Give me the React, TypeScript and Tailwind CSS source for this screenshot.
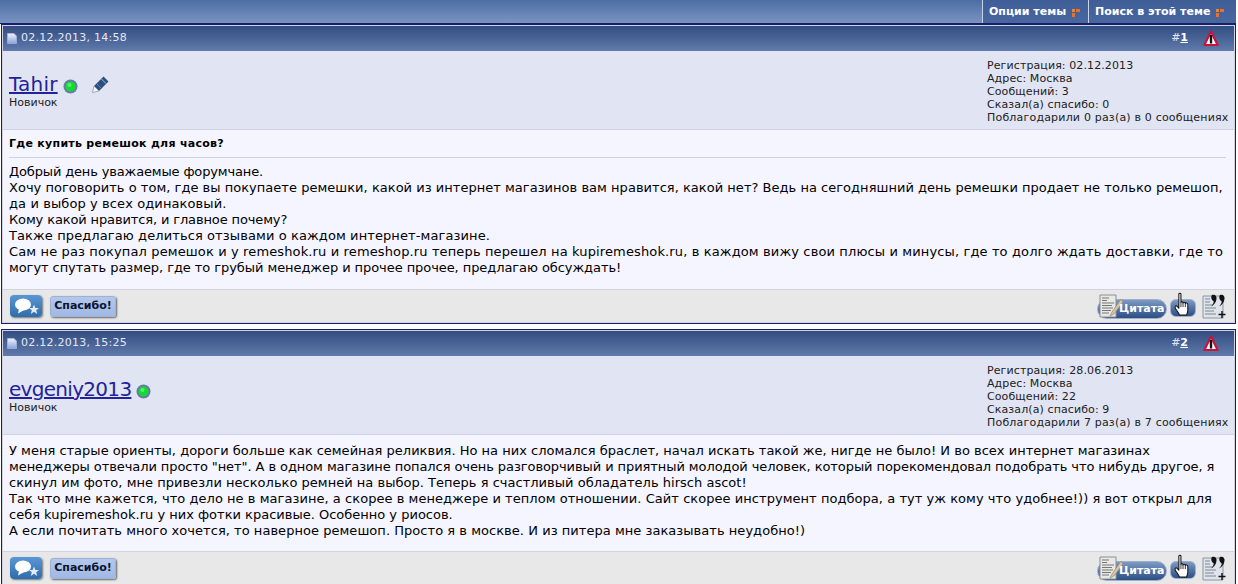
// Forum thread page: toolbar strip and two posts.
const FONT = "font-['DejaVu_Sans','Liberation_Sans',sans-serif]";

function MenuDots() {
  return (
    <svg width="8" height="8" viewBox="0 0 8 8" className="ml-[6px] mt-[1px]">
      <rect x="0" y="0" width="3" height="3" fill="#d98a3a" />
      <rect x="4" y="0" width="4" height="3" fill="#e8702a" />
      <rect x="0" y="4" width="3" height="4" fill="#e8702a" />
    </svg>
  );
}

function PostIcon() {
  return (
    <svg width="10" height="11" viewBox="0 0 10 11">
      <defs>
        <linearGradient id="doc" x1="0" y1="0" x2="0" y2="1">
          <stop offset="0" stopColor="#eef1fa" />
          <stop offset="1" stopColor="#8aa4dc" />
        </linearGradient>
      </defs>
      <path d="M0.5 0.5H7L9.5 3V10.5H0.5Z" fill="url(#doc)" stroke="#b4c0de" strokeWidth="0.6" />
    </svg>
  );
}

function WarnIcon() {
  return (
    <svg width="16" height="17" viewBox="0 0 16 17">
      <path d="M8 1.5L14.6 15H1.4Z" fill="#fff" stroke="#c8143c" strokeWidth="2.2" strokeLinejoin="round" />
      <rect x="6.8" y="5" width="2.4" height="8.5" fill="#111" />
    </svg>
  );
}

function OnlineDot() {
  return (
    <svg width="15" height="15" viewBox="0 0 15 15">
      <circle cx="7.5" cy="7.5" r="7" fill="#6a7aa6" />
      <circle cx="7.5" cy="7.5" r="5" fill="#12dc2e" />
      <circle cx="6.5" cy="6" r="2" fill="#52f268" />
    </svg>
  );
}

function PencilIcon() {
  return (
    <svg width="17" height="17" viewBox="0 0 17 17">
      <path d="M11.5 0.5L16.5 5.5L7 15L2 10Z" fill="#2c4f80" />
      <path d="M2 10L7 15L0.5 16.5Z" fill="#f4f4f8" stroke="#6f7f9c" strokeWidth="0.6" />
      <path d="M9.5 3L14 7.5" stroke="#a9c0e0" strokeWidth="1" />
      <path d="M5 8L9.5 12.5" stroke="#5f83b4" strokeWidth="1" />
    </svg>
  );
}

function CommentButton() {
  return (
    <div className="w-[32px] h-[22px] rounded-[4px] bg-gradient-to-b from-[#5b97d4] to-[#2f6cab] shadow-[1px_1px_2px_#777] flex items-center justify-center">
      <svg width="28" height="18" viewBox="0 0 28 18">
        <ellipse cx="11" cy="7.5" rx="8" ry="6" fill="#fff" />
        <path d="M7 12L6 16.5L12 13Z" fill="#fff" />
        <path d="M22 7.5L23.4 11H27L24.2 13.2L25.2 17L22 14.8L18.8 17L19.8 13.2L17 11H20.6Z" fill="#e4ecf8" />
      </svg>
    </div>
  );
}

function ThanksButton() {
  return (
    <div className="w-[66px] h-[21px] rounded-[3px] bg-gradient-to-b from-[#b4c8ec] to-[#a0b8e4] shadow-[1px_1px_2px_#666] border border-[#9fb2d6] flex items-center justify-center text-[11px] font-bold text-[#0c1430]">
      Спасибо!
    </div>
  );
}

function QuoteButton() {
  return (
    <div className="relative w-[70px] h-[25px]">
      <div className="absolute left-0 top-[5px] w-[70px] h-[20px] rounded-full bg-gradient-to-b from-[#7c9ac4] to-[#2d4f85] border border-[#a0b0c8]" />
      <svg width="28" height="25" viewBox="0 0 28 25" className="absolute left-[0px] top-0">
        <path d="M3 1H19V23H3Z" fill="#e8e8e4" stroke="#8a8f98" strokeWidth="1" />
        <path d="M5 4H12M5 6.5H10M5 9H17M5 11.5H15M5 14H16M5 16.5H14M5 19H12" stroke="#777" strokeWidth="1" />
        <path d="M24 5L15 18L13 22L17 20L26 8Z" fill="#d2c4a6" stroke="#8f8068" strokeWidth="0.6" />
      </svg>
      <span className="absolute left-[22px] top-[8px] text-[11px] leading-[14px] font-bold text-white">
        Цитата
      </span>
    </div>
  );
}

function HandIcon() {
  return (
    <div className="relative w-[26px] h-[25px]">
      <div className="absolute left-0 top-[5px] w-[26px] h-[18px] rounded-[6px] bg-gradient-to-b from-[#7c9ac4] to-[#2d4f85] border border-[#a0b0c8]" />
      <svg width="19" height="25" viewBox="0 0 17 24" className="absolute left-[3px] top-[-2px]">
        <path
          d="M5 2C5 0.8 7 0.8 7 2V10C7 9 9 9 9 10.5C9 9.5 11.2 9.5 11.2 11C11.2 10.2 13.6 10.2 13.6 12V17C13.6 19 13 20 12.5 22H5.5C5 20 3 18 1.6 15.5C0.8 14 2 12.8 3.2 13.6L5 15.5Z"
          fill="#fff"
          stroke="#111"
          strokeWidth="1"
          strokeLinejoin="round"
        />
        <path d="M7 10V14.5M9 10.5V14.5M11.2 11V14.5" stroke="#111" strokeWidth="0.8" />
      </svg>
    </div>
  );
}

function MultiQuoteIcon() {
  return (
    <svg width="26" height="25" viewBox="0 0 26 25">
      <path d="M1 2H21V24H1Z" fill="#dfe3ea" stroke="#8a94a8" strokeWidth="1" />
      <path d="M3 5H8M3 8H8M3 11H11M3 14H14M3 17H12M3 20H14" stroke="#7f8794" strokeWidth="1" />
      <path d="M10 1C13 0 15 2 14.5 5C14 8.5 12 11 9 12.5C11 10.5 11.8 9 11.6 7C9.5 6.5 8.5 2.5 10 1Z" fill="#111" />
      <path d="M18 1C21 0 23 2 22.5 5C22 8.5 20 11 17 12.5C19 10.5 19.8 9 19.6 7C17.5 6.5 16.5 2.5 18 1Z" fill="#111" />
      <path d="M20 17V24M16.5 20.5H23.5" stroke="#111" strokeWidth="1.4" />
    </svg>
  );
}

type Line = { text: string; cls: string };

type PostProps = {
  date: string;
  num: number;
  name: string;
  nameCls: string;
  edited?: boolean;
  reg: string;
  posts: number;
  said: number;
  thanked: string;
  thankedCls: string;
  title?: string;
  lines: Line[];
  bodyCls: string;
};

function Post({ date, num, name, nameCls, edited, reg, posts, said, thanked, thankedCls, title, lines, bodyCls }: PostProps) {
  return (
    <div className="border border-[#14206e] w-[1235px] ml-[1px] p-[1px] bg-[#d1d1e1]">
      <div className="h-[25px] flex items-center bg-gradient-to-b from-[#334d80] to-[#5f7aab] text-[11px] text-[#e6e6f8] pl-[4px]">
        <PostIcon />
        <span className="ml-[4px] tracking-[0.25px]">{date}</span>
        <span className="ml-auto">
          #<span className="font-bold underline text-white">{num}</span>
        </span>
        <span className="ml-[15px] mr-[15px] flex">
          <WarnIcon />
        </span>
      </div>
      <div className="h-[79px] bg-[#e1e4f2] border-b border-[#d1d1e9] flex text-[11px] leading-[13px] text-[#222]">
        <div className="pl-[6px] pt-[21px]">
          <div className="flex items-center">
            <a className={`text-[20px] leading-[24px] text-[#22229c] underline ${nameCls}`}>{name}</a>
            <span className="ml-[5px] mt-[5px] flex">
              <OnlineDot />
            </span>
            {edited && (
              <span className="ml-[14px] flex">
                <PencilIcon />
              </span>
            )}
          </div>
          <div>Новичок</div>
        </div>
        <div className="ml-auto w-[247px] pt-[8px] whitespace-nowrap tracking-[0.1px]">
          <div>Регистрация: {reg}</div>
          <div>Адрес: Москва</div>
          <div>Сообщений: {posts}</div>
          <div>Сказал(а) спасибо: {said}</div>
          <div className={thankedCls}>{thanked}</div>
        </div>
      </div>
      <div className={`${bodyCls} bg-[#f5f5ff] px-[6px] text-[13px] leading-[16px] text-black border-b border-[#d1d1e1] whitespace-nowrap`}>
        {title && (
          <>
            <div className="font-bold text-[11px] leading-[14px] tracking-[0.28px]">{title}</div>
            <div className="h-[1px] bg-[#d1d1e1] mt-[6px] mb-[6px] mr-[2px]" />
          </>
        )}
        {lines.map((l) => (
          <div key={l.text} className={l.cls}>
            {l.text}
          </div>
        ))}
      </div>
      <div className="h-[32px] bg-[#e8e8e8] flex items-center pl-[7px] pr-[6px]">
        <CommentButton />
        <span className="ml-[8px] flex">
          <ThanksButton />
        </span>
        <span className="ml-auto flex items-center">
          <QuoteButton />
          <span className="ml-[3px] flex">
            <HandIcon />
          </span>
          <span className="ml-[6px] flex">
            <MultiQuoteIcon />
          </span>
        </span>
      </div>
    </div>
  );
}

export default function App() {
  return (
    <div className={`${FONT} w-[1238px] h-[584px] overflow-hidden bg-white`}>
      <div className="h-[24px] w-[1236px] bg-gradient-to-b from-[#4c6ea6] to-[#7a94bf] border-b border-[#14206e] flex justify-end text-[11px] font-bold text-white">
        <div className="h-[23px] w-[106px] border-l border-[#c8d4e8] bg-gradient-to-b from-[#3f5e98] to-[#48679f] flex items-center pl-[6px] pt-[1px]">
          Опции темы
          <MenuDots />
        </div>
        <div className="h-[23px] w-[148px] border-l border-[#c8d4e8] bg-gradient-to-b from-[#3f5e98] to-[#48679f] flex items-center pl-[6px] pt-[1px]">
          Поиск в этой теме
          <MenuDots />
        </div>
      </div>
      <Post
        date="02.12.2013, 14:58"
        num={1}
        name="Tahir"
        nameCls="tracking-[0.2px]"
        edited
        reg="02.12.2013"
        posts={3}
        said={0}
        thanked="Поблагодарили 0 раз(а) в 0 сообщениях"
        thankedCls="tracking-[0.19px]"
        title="Где купить ремешок для часов?"
        bodyCls="h-[160px] pt-[7px]"
        lines={[
          { text: "Добрый день уважаемые форумчане.", cls: "tracking-[-0.15px]" },
          {
            text: "Хочу поговорить о том, где вы покупаете ремешки, какой из интернет магазинов вам нравится, какой нет? Ведь на сегодняшний день ремешки продает не только ремешоп,",
            cls: "tracking-[0.025px]",
          },
          { text: "да и выбор у всех одинаковый.", cls: "tracking-[0.1px]" },
          { text: "Кому какой нравится, и главное почему?", cls: "tracking-[-0.13px]" },
          { text: "Также предлагаю делиться отзывами о каждом интернет-магазине.", cls: "tracking-[0.1px]" },
          {
            text: "Сам не раз покупал ремешок и у remeshok.ru и remeshop.ru теперь перешел на kupiremeshok.ru, в каждом вижу свои плюсы и минусы, где то долго ждать доставки, где то",
            cls: "tracking-[0.13px]",
          },
          {
            text: "могут спутать размер, где то грубый менеджер и прочее прочее, предлагаю обсуждать!",
            cls: "tracking-[-0.07px]",
          },
        ]}
      />
      <div className="h-[5px]" />
      <Post
        date="02.12.2013, 15:25"
        num={2}
        name="evgeniy2013"
        nameCls="tracking-[-0.7px]"
        reg="28.06.2013"
        posts={22}
        said={9}
        thanked="Поблагодарили 7 раз(а) в 7 сообщениях"
        thankedCls="tracking-[0.19px]"
        bodyCls="h-[117px] pt-[8px]"
        lines={[
          {
            text: "У меня старые ориенты, дороги больше как семейная реликвия. Но на них сломался браслет, начал искать такой же, нигде не было! И во всех интернет магазинах",
            cls: "tracking-[0.01px]",
          },
          {
            text: 'менеджеры отвечали просто "нет". А в одном магазине попался очень разговорчивый и приятный молодой человек, который порекомендовал подобрать что нибудь другое, я',
            cls: "tracking-[-0.08px]",
          },
          {
            text: "скинул им фото, мне привезли несколько ремней на выбор. Теперь я счастливый обладатель hirsch ascot!",
            cls: "tracking-[0.02px]",
          },
          {
            text: "Так что мне кажется, что дело не в магазине, а скорее в менеджере и теплом отношении. Сайт скорее инструмент подбора, а тут уж кому что удобнее!)) я вот открыл для",
            cls: "tracking-[0.045px]",
          },
          { text: "себя kupiremeshok.ru у них фотки красивые. Особенно у риосов.", cls: "tracking-normal" },
          {
            text: "А если почитать много хочется, то наверное ремешоп. Просто я в москве. И из питера мне заказывать неудобно!)",
            cls: "tracking-[0.04px]",
          },
        ]}
      />
    </div>
  );
}
